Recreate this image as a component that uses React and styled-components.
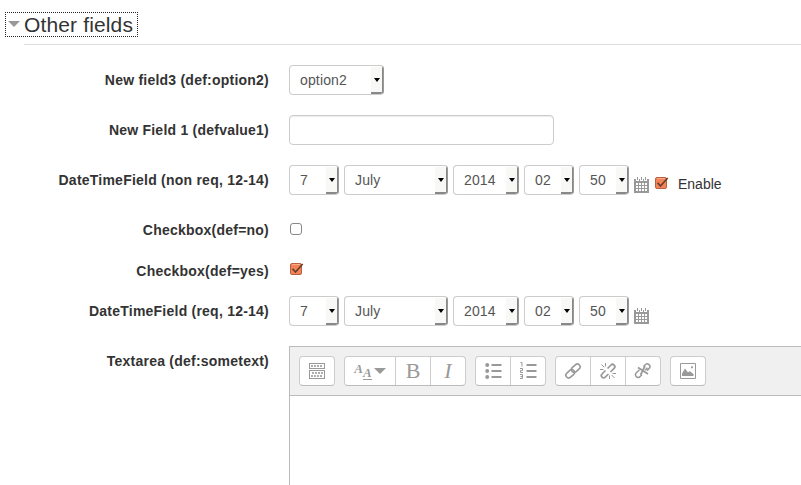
import React from 'react';
import styled, { createGlobalStyle } from 'styled-components';

const GlobalStyle = createGlobalStyle`
	* {
		box-sizing: border-box;
	}
	body {
		margin: 0;
		background: #fff;
		color: #333;
		font: 14px/20px 'Liberation Sans', Arial, sans-serif;
		overflow: hidden;
	}
`;

const Fieldset = styled.section`
	height: 485px;
	overflow: hidden;
	padding-top: 12px;
`;

const Legend = styled.h2`
	display: flex;
	align-items: center;
	width: 133px;
	height: 25px;
	margin: 0 0 0 5px;
	padding-left: 2px;
	border: 1px dotted #222;
	font-size: 21px;
	font-weight: normal;
	letter-spacing: 0.14px;
	white-space: nowrap;
`;

const Twisty = styled.span`
	border: 6px solid transparent;
	border-top-color: #999;
	border-bottom: 0;
	margin: 0 4px 2px 0;
`;

const Divider = styled.div`
	height: 1px;
	margin: 7px 0 20px 24px;
	background: #ddd;
`;

const Row = styled.div`
	display: flex;
	align-items: flex-start;
	height: ${p => p.$height || 50}px;
`;

const Label = styled.label`
	width: 269px;
	margin-right: 20px;
	padding-top: 5px;
	flex-shrink: 0;
	text-align: right;
	font-weight: bold;
	letter-spacing: 0.23px;
	white-space: nowrap;
`;

const Controls = styled.div`
	display: flex;
	align-items: flex-start;
	gap: 5px;
`;

const SelectBox = styled.div`
	display: flex;
	justify-content: space-between;
	width: ${p => p.$width}px;
	height: 30px;
	padding-left: 10px;
	border: 1px solid #ccc;
	border-right-color: #999;
	border-radius: 4px;
	color: #555;
	line-height: 28px;
	letter-spacing: 0.15px;
	overflow: hidden;
`;

const Arrow = styled.span`
	display: flex;
	align-items: center;
	justify-content: center;
	width: 12px;
	margin-top: 1px;
	background: #f8f8f6;
	border-right: 1px solid #888;
	border-bottom: 2px solid #888;

	&::after {
		content: '';
		margin-left: 1px;
		border: 3.5px solid transparent;
		border-top: 4px solid #000;
		border-bottom: 0;
	}
`;

const Input = styled.input`
	width: 265px;
	height: 30px;
	border: 1px solid #ccc;
	border-radius: 4px;
	box-shadow: inset 0 1px 1px rgba(0, 0, 0, 0.075);
`;

const EmptyCheck = styled.span`
	width: 12px;
	height: 12px;
	margin: ${p => p.$top}px 0 0 1px;
	border: 1px solid #888;
	border-radius: 3px;
`;

const CheckSvg = styled.svg`
	margin: ${p => p.$top}px 0 0 1px;
`;

const CalendarSvg = styled.svg`
	margin-top: 12px;
`;

const EnableText = styled.span`
	margin: 9px 0 0 4px;
`;

const Editor = styled.div`
	flex: 1;
	height: 160px;
	border: 1px solid #bbb;
	border-right: 0;
`;

const Toolbar = styled.div`
	display: flex;
	gap: 9px;
	height: 49px;
	padding: 9px;
	background: #f0f0f0;
	border-bottom: 1px solid #bbb;
`;

const Group = styled.div`
	display: flex;
	height: 30px;
	border: 1px solid #ccc;
	border-bottom-color: #bbb;
	border-radius: 4px;
	background: #fff;
`;

const Tool = styled.span`
	display: flex;
	align-items: center;
	justify-content: center;
	width: ${p => p.$width || 35}px;
	color: #999;
	font: ${p => (p.$italic ? 'italic' : 'normal')} 22px/28px 'Liberation Serif', serif;

	& + & {
		border-left: 1px solid #ccc;
	}
`;

const FontTool = styled(Tool)`
	font-size: 13px;
	font-style: italic;
	font-weight: bold;
	line-height: 13px;
`;

const LargeA = styled.span`
	margin-bottom: 5px;
`;

const UnderlinedA = styled.span`
	margin: 4px 2px 0 0;
	border-bottom: 1px solid #999;
`;

const Caret = styled.span`
	border: 6px solid transparent;
	border-top-color: #999;
	border-bottom: 0;
`;

const Select = ({ width, children }) => (
	<SelectBox $width={width}>
		{children}
		<Arrow />
	</SelectBox>
);

const Checked = ({ top }) => (
	<CheckSvg $top={top} width='14' height='13' viewBox='0 0 14 13'>
		<rect x='.5' y='.5' width='11' height='11' rx='1.5' fill='#f58358' stroke='#b56040' />
		<path d='M2 1.5h8' stroke='#f8ac88' />
		<path d='M2.5 5.7l3 3.3L12.7 1' fill='none' stroke='#65402f' strokeWidth='1.7' />
	</CheckSvg>
);

const Calendar = () => (
	<CalendarSvg width='15' height='16' viewBox='0 0 15 16' shapeRendering='crispEdges'>
		<path d='M0 2h15v14H0z' fill='#999' />
		<path d='M2 1h3v3H2zM6 1h3v3H6zM10 1h3v3h-3z' fill='#fff' />
		<path d='M3 0h1v3H3zM7 0h1v3H7zM11 0h1v3h-1z' fill='#999' />
		{[6, 9, 12].map(y => (
			<path key={y} d={`M2 ${y}h2v2H2zM5 ${y}h2v2H5zM8 ${y}h2v2H8zM11 ${y}h2v2h-2z`} fill='#fff' />
		))}
	</CalendarSvg>
);

const DateSelects = () => (
	<>
		<Select width={50}>7</Select>
		<Select width={104}>July</Select>
		<Select width={66}>2014</Select>
		<Select width={50}>02</Select>
		<Select width={50}>50</Select>
		<Calendar />
	</>
);

const ToggleIcon = () => (
	<svg width='16' height='16' viewBox='0 0 16 16' fill='none' stroke='#999' shapeRendering='crispEdges'>
		<path d='M.5.5h15v5H.5zM.5 7.5h15v8H.5z' />
		<path d='M2 3h12M3 10h11M2 13h12' strokeWidth='2' strokeDasharray='2 1' strokeOpacity='.8' />
	</svg>
);

// bullets or numerals in front of three bars
const ListIcon = ({ numbered }) => (
	<svg width='17' height='18' viewBox='0 0 17 18' fill='#999'>
		<path d='M6.5 2h10v2h-10zM6.5 8h10v2h-10zM6.5 14h10v2h-10z' />
		{numbered ? (
			<path
				d='M.5 .5h1.5v4M0 6.5h2.5v2h-2v2H3M0 12.5h2.5v4H0M.5 14.5h2'
				fill='none'
				stroke='#999'
			/>
		) : (
			[3, 9, 15].map(y => <circle key={y} cx='2.2' cy={y} r='2' />)
		)}
	</svg>
);

const LinkIcon = () => (
	<svg width='18' height='18' viewBox='0 0 18 18' fill='none' stroke='#999' strokeWidth='1.6'>
		<rect x='-4.8' y='-2.8' width='9.6' height='5.6' rx='2.8' transform='translate(11.8 6.2) rotate(-42)' />
		<rect x='-4.8' y='-2.8' width='9.6' height='5.6' rx='2.8' transform='translate(6.2 11.8) rotate(-42)' />
	</svg>
);

const UnlinkIcon = () => (
	<svg width='18' height='18' viewBox='0 0 18 18' fill='none' stroke='#999'>
		<path
			d='M8.5 6.5L12 3c2-2 5.2 1 3.3 3.2L11.5 10M6.5 8.5L3 12c-2 2 1 5 3.2 3.2L9.5 12'
			strokeWidth='1.7'
		/>
		<path d='M6.5 1v3.5M2.5 2.5l2.8 2.8M1 7.5h3.5M13.5 11.5H17M12.5 13l3 3M10.5 13.5v3.5' />
	</svg>
);

const NoLinkIcon = () => (
	<svg width='18' height='18' viewBox='0 0 18 18' fill='none' stroke='#999' strokeWidth='1.5'>
		<path d='M9.5 4.5l2-2c2.2-2 5.8 1.2 4 3.6L13 8.8M11 8.2l2.5-2.5M5.5 7.8l-3.2 3c-2.2 2.4.8 5.8 3.4 4.2L8 12.8' />
		<path d='M4 5.5l10 6.5M11 4l-4.5 9' strokeWidth='1.7' />
	</svg>
);

const ImageIcon = () => (
	<svg width='16' height='16' viewBox='0 0 16 16' fill='#999'>
		<path d='M.5.5h15v15H.5z' fill='none' stroke='#999' />
		<path d='M2 13v-2.5L5 5.5l3 4L9.5 8 13.5 11v2z' />
		<circle cx='12' cy='4.3' r='1.1' />
	</svg>
);

const App = () => (
	<>
		<GlobalStyle />
		<Fieldset>
			<Legend>
				<Twisty />
				Other fields
			</Legend>
			<Divider />
			<Row>
				<Label>New field3 (def:option2)</Label>
				<Select width={95}>option2</Select>
			</Row>
			<Row>
				<Label>New Field 1 (defvalue1)</Label>
				<Input />
			</Row>
			<Row>
				<Label>DateTimeField (non req, 12-14)</Label>
				<Controls>
					<DateSelects />
					<Checked top={12} />
					<EnableText>Enable</EnableText>
				</Controls>
			</Row>
			<Row $height={41}>
				<Label>Checkbox(def=no)</Label>
				<EmptyCheck $top={8} />
			</Row>
			<Row $height={40}>
				<Label>Checkbox(def=yes)</Label>
				<Checked top={7} />
			</Row>
			<Row>
				<Label>DateTimeField (req, 12-14)</Label>
				<Controls>
					<DateSelects />
				</Controls>
			</Row>
			<Row $height={160}>
				<Label>Textarea (def:sometext)</Label>
				<Editor>
					<Toolbar>
						<Group>
							<Tool $width={34}><ToggleIcon /></Tool>
						</Group>
						<Group>
							<FontTool $width={50}>
								<LargeA>A</LargeA>
								<UnderlinedA>A</UnderlinedA>
								<Caret />
							</FontTool>
							<Tool>B</Tool>
							<Tool $italic>I</Tool>
						</Group>
						<Group>
							<Tool $width={34}><ListIcon /></Tool>
							<Tool><ListIcon numbered /></Tool>
						</Group>
						<Group>
							<Tool $width={34}><LinkIcon /></Tool>
							<Tool><UnlinkIcon /></Tool>
							<Tool><NoLinkIcon /></Tool>
						</Group>
						<Group>
							<Tool $width={34}><ImageIcon /></Tool>
						</Group>
					</Toolbar>
				</Editor>
			</Row>
		</Fieldset>
	</>
);

export default App;
